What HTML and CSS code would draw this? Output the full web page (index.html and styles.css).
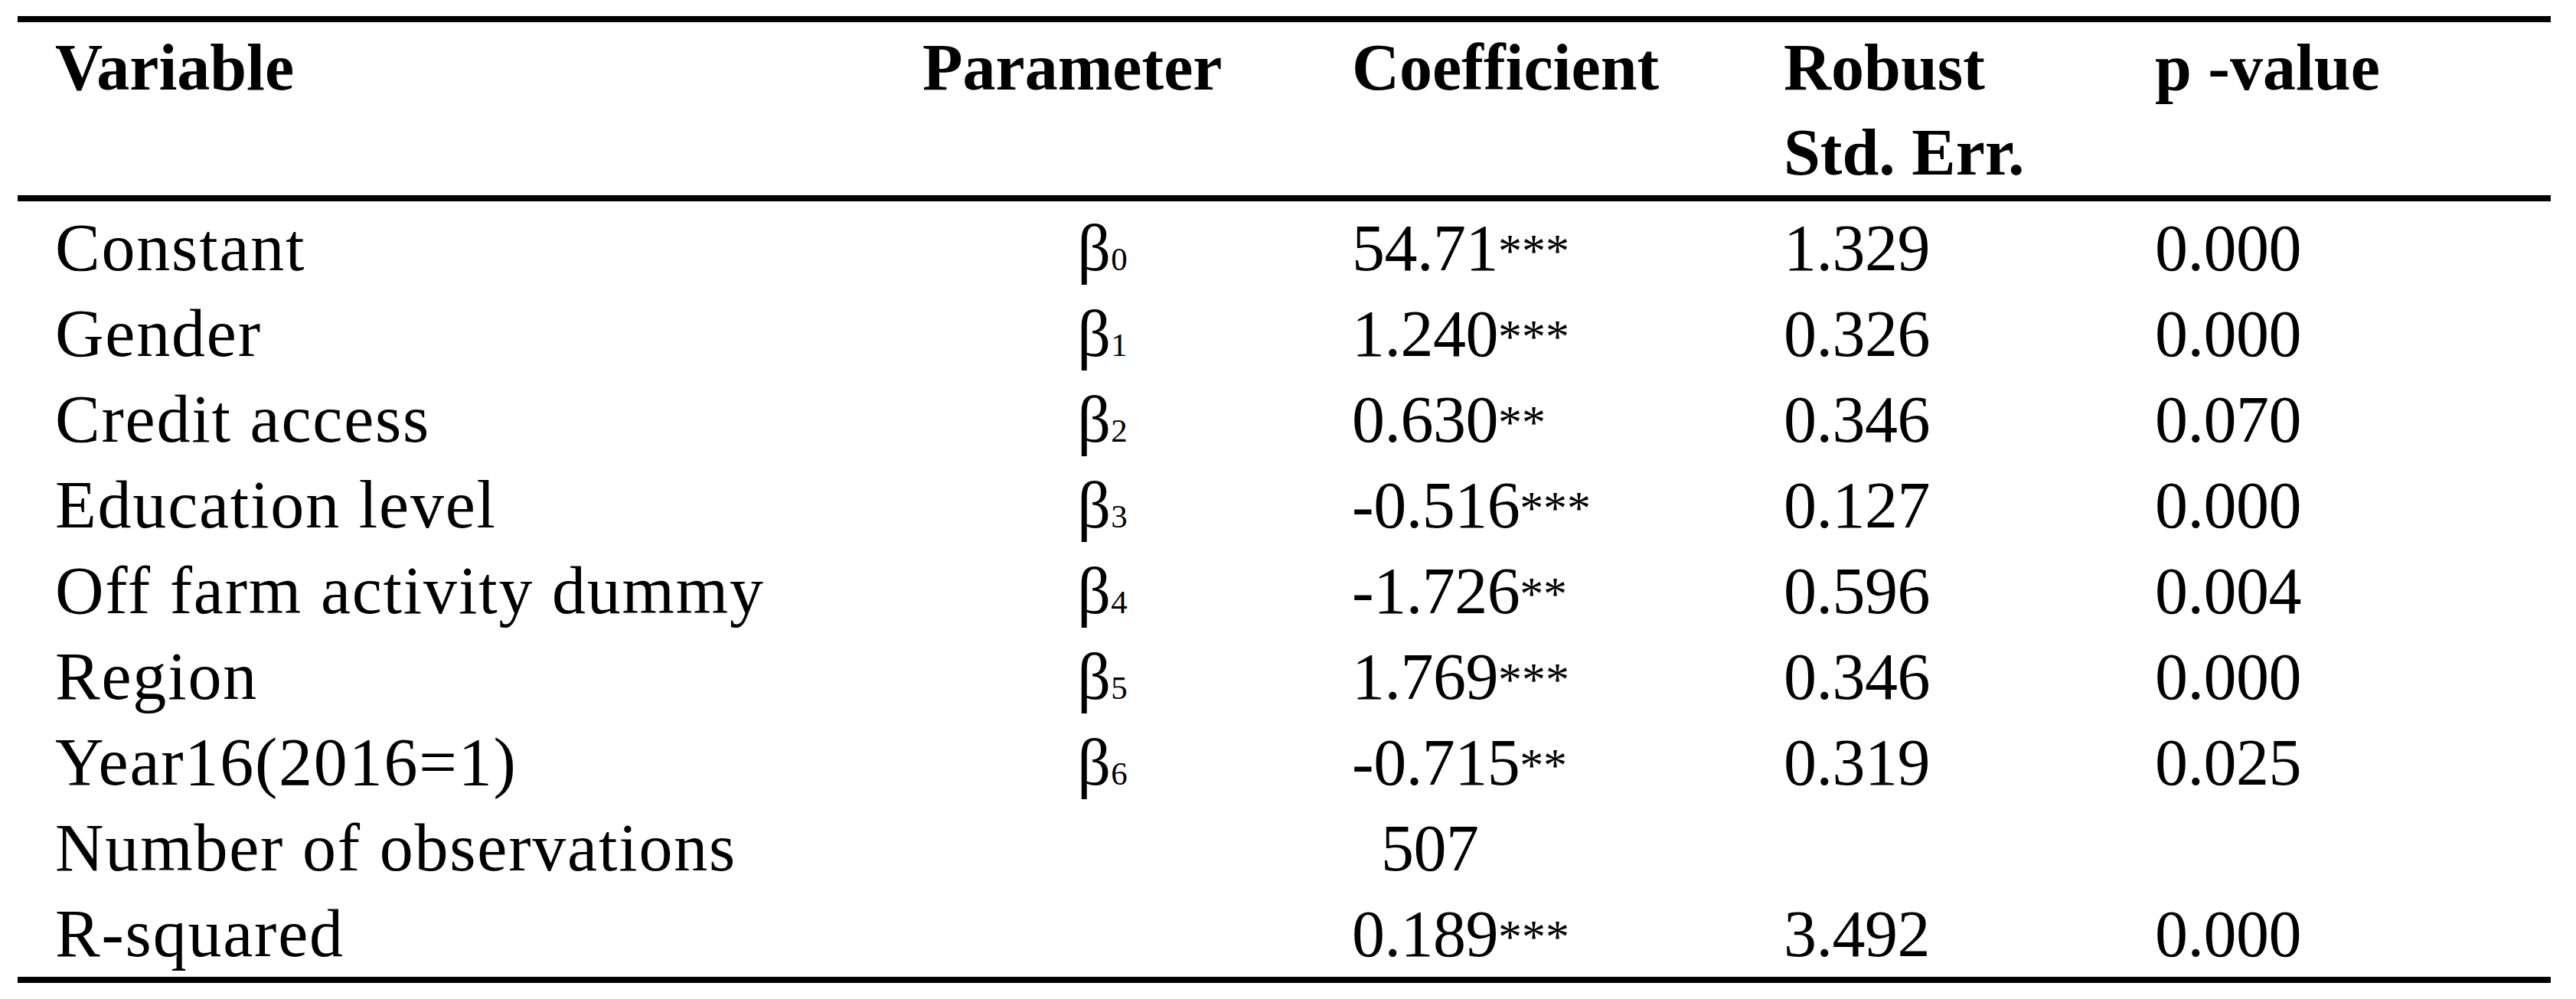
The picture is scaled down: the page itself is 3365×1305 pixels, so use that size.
FILE: index.html
```html
<!DOCTYPE html>
<html lang="en">
<head>
  <meta charset="UTF-8" />
  <title>Regression results</title>
  <link rel="stylesheet" href="styles.css">
</head>
<body>

<table class="results">
  <colgroup>
    <col class="c-var">
    <col class="c-par">
    <col class="c-coef">
    <col class="c-se">
    <col class="c-p">
  </colgroup>
  <thead>
    <tr>
      <th class="var">Variable</th>
      <th class="par">Parameter</th>
      <th class="coef">Coefficient</th>
      <th class="se">Robust<br>Std. Err.</th>
      <th class="p">p -value</th>
    </tr>
  </thead>
  <tbody>
    <tr>
      <td class="var">Constant</td>
      <td class="par">β<sub>0</sub></td>
      <td class="coef">54.71<span class="sig">***</span></td>
      <td class="se">1.329</td>
      <td class="p">0.000</td>
    </tr>
    <tr>
      <td class="var">Gender</td>
      <td class="par">β<sub>1</sub></td>
      <td class="coef">1.240<span class="sig">***</span></td>
      <td class="se">0.326</td>
      <td class="p">0.000</td>
    </tr>
    <tr>
      <td class="var">Credit access</td>
      <td class="par">β<sub>2</sub></td>
      <td class="coef">0.630<span class="sig">**</span></td>
      <td class="se">0.346</td>
      <td class="p">0.070</td>
    </tr>
    <tr>
      <td class="var">Education level</td>
      <td class="par">β<sub>3</sub></td>
      <td class="coef">-0.516<span class="sig">***</span></td>
      <td class="se">0.127</td>
      <td class="p">0.000</td>
    </tr>
    <tr>
      <td class="var">Off farm activity dummy</td>
      <td class="par">β<sub>4</sub></td>
      <td class="coef">-1.726<span class="sig">**</span></td>
      <td class="se">0.596</td>
      <td class="p">0.004</td>
    </tr>
    <tr>
      <td class="var">Region</td>
      <td class="par">β<sub>5</sub></td>
      <td class="coef">1.769<span class="sig">***</span></td>
      <td class="se">0.346</td>
      <td class="p">0.000</td>
    </tr>
    <tr>
      <td class="var">Year16(2016=1)</td>
      <td class="par">β<sub>6</sub></td>
      <td class="coef">-0.715<span class="sig">**</span></td>
      <td class="se">0.319</td>
      <td class="p">0.025</td>
    </tr>
    <tr>
      <td class="var">Number of observations</td>
      <td class="par"></td>
      <td class="coef count">507</td>
      <td class="se"></td>
      <td class="p"></td>
    </tr>
    <tr class="last">
      <td class="var">R-squared</td>
      <td class="par"></td>
      <td class="coef">0.189<span class="sig">***</span></td>
      <td class="se">3.492</td>
      <td class="p">0.000</td>
    </tr>
  </tbody>
</table>

</body>
</html>
```

FILE: styles.css
```css
* { box-sizing: border-box; }
body {
  margin: 0;
  background: #fff;
  color: #000;
  font-family: 'Liberation Serif', 'Times New Roman', serif;
}
.results {
  margin: 21px 0 0 23px;
  width: 3309px;
  table-layout: fixed;
  border-collapse: separate;
  border-spacing: 0;
  font-size: 86px;
}
.c-var { width: 1135px; }
.c-par { width: 564px; }
.c-coef { width: 558px; }
.c-se { width: 494px; }
.c-p { width: 558px; }

th, td {
  text-align: left;
  vertical-align: top;
  white-space: nowrap;
  padding: 0;
}
th {
  font-weight: bold;
  line-height: 111px;
  padding-top: 4px;
  border-top: 8px solid #000;
  border-bottom: 8px solid #000;
}
td {
  font-weight: normal;
  line-height: 112px;
  letter-spacing: -0.5px;
}
tbody tr:first-child td { padding-top: 5px; }
tr.last td { border-bottom: 8px solid #000; }

.var { padding-left: 49px; }
td.var { font-size: 88px; letter-spacing: 1.8px; }
th.par { padding-left: 47px; }
td.par { text-align: center; padding-left: 0; letter-spacing: 0; }
.coef { padding-left: 44px; }
.se { padding-left: 50px; }
.p { padding-left: 41px; }
td.count { padding-left: 82px; }

.sig {
  font-size: 72%;
  vertical-align: 5px;
  letter-spacing: 0;
  line-height: 1;
}
sub {
  font-size: 50%;
  vertical-align: baseline;
  line-height: 1;
  letter-spacing: 0;
}
```
